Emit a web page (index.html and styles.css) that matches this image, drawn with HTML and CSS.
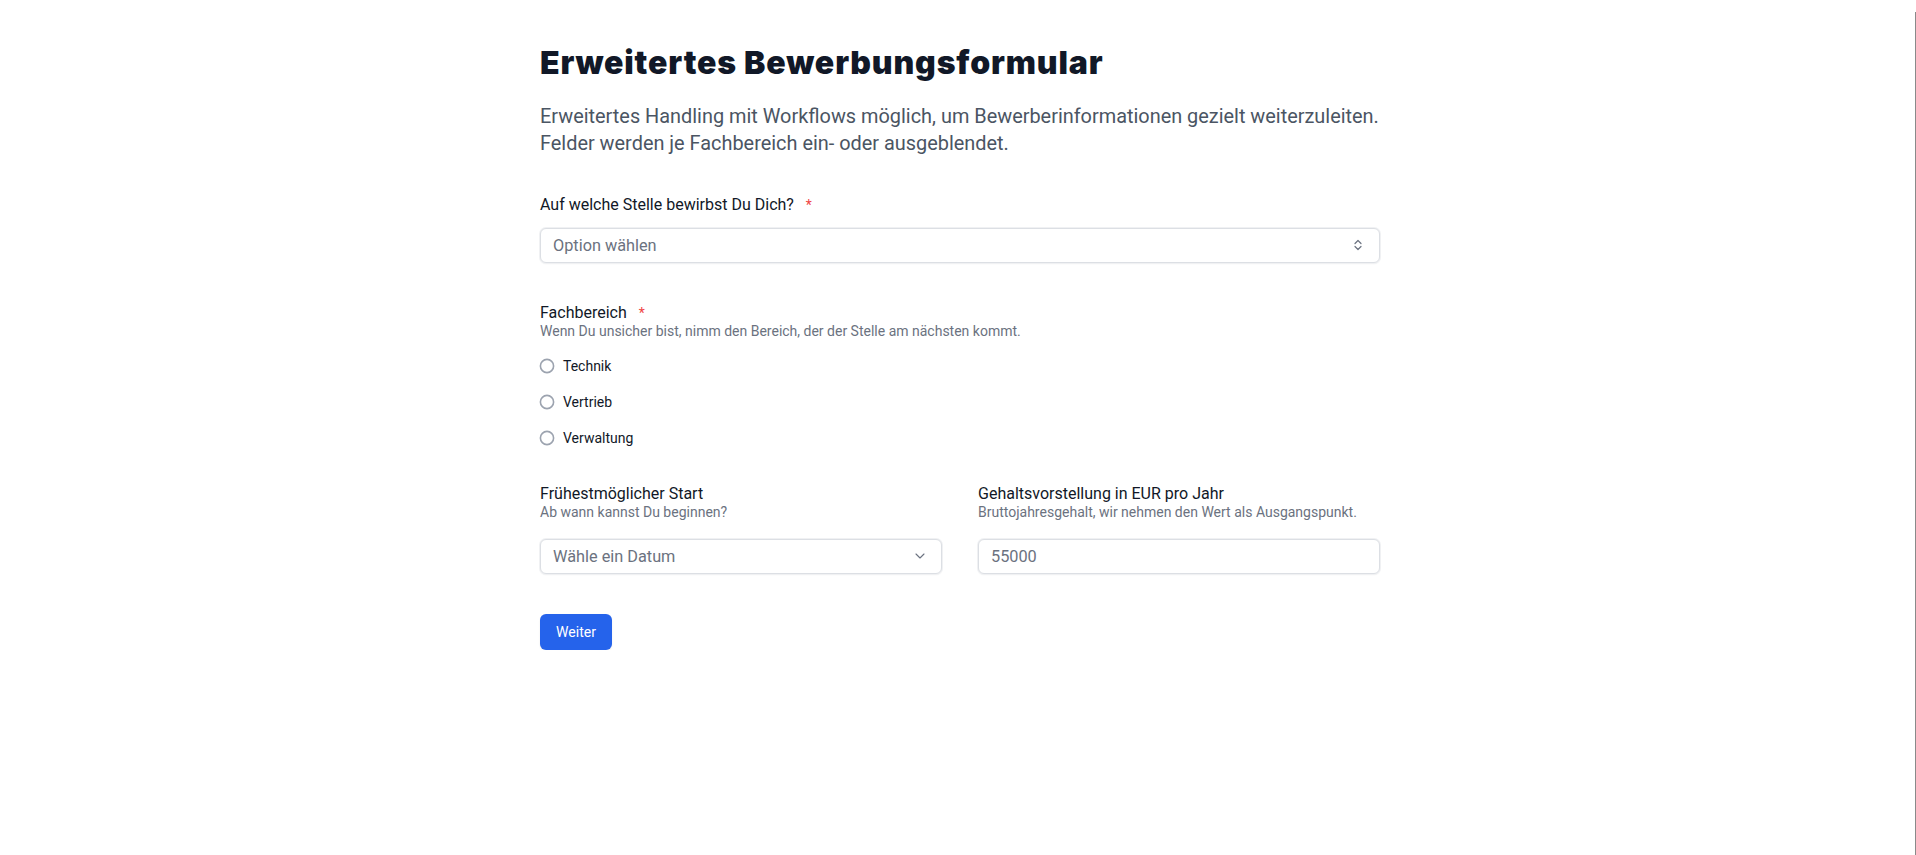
FILE: index.html
```html
<!DOCTYPE html>
<html lang="de">
<head>
<meta charset="utf-8">
<title>Erweitertes Bewerbungsformular</title>
<link rel="stylesheet" href="styles.css">
</head>
<body>
<main class="form">
  <h1 class="title">Erweitertes Bewerbungsformular</h1>
  <p class="intro">Erweitertes Handling mit Workflows möglich, um Bewerberinformationen gezielt weiterzuleiten.<br>Felder werden je Fachbereich ein- oder ausgeblendet.</p>

  <section class="field field-position">
    <div class="label">Auf welche Stelle bewirbst Du Dich? <span class="req">*</span></div>
    <div class="control select">
      <span class="placeholder">Option wählen</span>
      <svg class="icon-updown" width="8" height="12" viewBox="0 0 8 12" aria-hidden="true"><path d="M1 4.5 L4 1.5 L7 4.5 M1 7.5 L4 10.5 L7 7.5" fill="none" stroke="#6b7280" stroke-width="1.2" stroke-linecap="round" stroke-linejoin="round"/></svg>
    </div>
  </section>

  <section class="field field-area">
    <div class="label">Fachbereich <span class="req">*</span></div>
    <div class="help">Wenn Du unsicher bist, nimm den Bereich, der der Stelle am nächsten kommt.</div>
    <div class="radios">
      <label class="radio-row"><svg class="radio" width="16" height="16" viewBox="0 0 16 16" aria-hidden="true"><circle cx="8" cy="8" r="6.6" fill="#ffffff" stroke="#9ca3af" stroke-width="1.6"/></svg><span class="radio-text">Technik</span></label>
      <label class="radio-row"><svg class="radio" width="16" height="16" viewBox="0 0 16 16" aria-hidden="true"><circle cx="8" cy="8" r="6.6" fill="#ffffff" stroke="#9ca3af" stroke-width="1.6"/></svg><span class="radio-text">Vertrieb</span></label>
      <label class="radio-row"><svg class="radio" width="16" height="16" viewBox="0 0 16 16" aria-hidden="true"><circle cx="8" cy="8" r="6.6" fill="#ffffff" stroke="#9ca3af" stroke-width="1.6"/></svg><span class="radio-text">Verwaltung</span></label>
    </div>
  </section>

  <section class="field-row">
    <div class="col">
      <div class="label">Frühestmöglicher Start</div>
      <div class="help">Ab wann kannst Du beginnen?</div>
      <div class="control input">
        <span class="placeholder">Wähle ein Datum</span>
        <svg class="icon-down" width="10" height="6" viewBox="0 0 10 6" aria-hidden="true"><path d="M1 1 L5 5 L9 1" fill="none" stroke="#6b7280" stroke-width="1.1" stroke-linecap="round" stroke-linejoin="round"/></svg>
      </div>
    </div>
    <div class="col">
      <div class="label">Gehaltsvorstellung in EUR pro Jahr</div>
      <div class="help">Bruttojahresgehalt, wir nehmen den Wert als Ausgangspunkt.</div>
      <div class="control input">
        <span class="value">55000</span>
      </div>
    </div>
  </section>

  <button class="btn" type="button">Weiter</button>
</main>
<div class="edge-line"></div>
</body>
</html>
```

FILE: styles.css
```css
html, body {
  margin: 0;
  padding: 0;
  background: #ffffff;
}

body {
  font-family: Roboto, "Noto Sans", "Liberation Sans", sans-serif;
  color: #111827;
}

.form {
  width: 840px;
  margin-left: calc(50% - 418px);
  padding-top: 44px;
  display: flex;
  flex-direction: column;
  align-items: flex-start;
}

.title {
  margin: 0;
  font-family: Inter, "Noto Sans", Roboto, sans-serif;
  font-size: 32px;
  line-height: 38px;
  font-weight: 900;
  color: #111827;
  letter-spacing: 0.85px;
}

.intro {
  margin: 20.6px 0 0;
  font-size: 19.9px;
  line-height: 27px;
  color: #4b5563;
  white-space: nowrap;
}

.field {
  width: 100%;
  display: flex;
  flex-direction: column;
}

.field-position {
  margin-top: 38.5px;
}

.field-area {
  margin-top: 40.5px;
}

.label {
  font-size: 16px;
  line-height: 20px;
  color: #111827;
}

.req {
  color: #ef4444;
  font-size: 14px;
  margin-left: 8px;
}

.help {
  font-size: 14px;
  line-height: 16px;
  color: #6b7280;
}

.control {
  box-sizing: border-box;
  height: 35px;
  width: 100%;
  border: 1px solid #dcdfe4;
  border-radius: 6px;
  box-shadow: 0 0 0 1px #f0f1f3, 0 1px 2px rgba(0, 0, 0, 0.06);
  display: flex;
  align-items: center;
  justify-content: space-between;
  padding: 0 17px 0 12px;
  font-size: 16.3px;
  background: #ffffff;
}

.field-position .select {
  margin-top: 12.5px;
}

.placeholder,
.value {
  color: #6b7280;
}

.icon-updown {
  display: block;
}

.icon-down {
  display: block;
}

.radios {
  margin-top: 16.5px;
  display: flex;
  flex-direction: column;
  gap: 16px;
}

.radio-row {
  display: flex;
  align-items: center;
  gap: 8px;
  height: 20px;
  font-size: 14px;
  line-height: 20px;
  color: #111827;
}

.radio {
  display: block;
  flex: none;
  margin-left: -1px;
}

.field-row {
  margin-top: 36.5px;
  width: 100%;
  display: grid;
  grid-template-columns: 1fr 1fr;
  column-gap: 36px;
}

.col {
  display: flex;
  flex-direction: column;
}

.col .input {
  margin-top: 18.5px;
}

.col .input .icon-down {
  margin-right: -1px;
}

.btn {
  margin-top: 40px;
  box-sizing: border-box;
  width: 72px;
  height: 36px;
  border: 0;
  border-radius: 6px;
  background: #2563eb;
  color: #ffffff;
  font-family: Roboto, "Noto Sans", "Liberation Sans", sans-serif;
  font-size: 14px;
  line-height: 20px;
  padding: 0;
  box-shadow: 0 1px 2px rgba(0, 0, 0, 0.08);
}

.edge-line {
  position: fixed;
  right: 0;
  top: 12px;
  bottom: 0;
  width: 1px;
  background: #8a8a8a;
}
```
